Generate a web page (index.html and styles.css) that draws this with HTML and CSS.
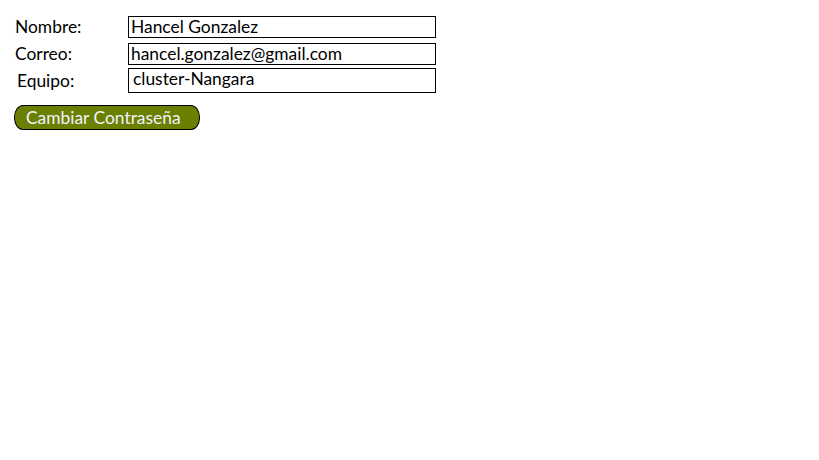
FILE: index.html
```html
<!DOCTYPE html>
<html lang="es">
<head>
<meta charset="utf-8">
<link rel="stylesheet" href="styles.css">
</head>
<body>
<div class="form">
  <div class="row row-1">
    <span class="label">Nombre:</span>
    <div class="field">Hancel Gonzalez</div>
  </div>
  <div class="row row-2">
    <span class="label">Correo:</span>
    <div class="field">hancel.gonzalez@gmail.com</div>
  </div>
  <div class="row row-3">
    <span class="label label-equipo">Equipo:</span>
    <div class="field field-tall">cluster-Nangara</div>
  </div>
  <button class="btn">Cambiar Contraseña</button>
</div>
</body>
</html>
```
FILE: styles.css
```css
html, body {
  margin: 0;
  padding: 0;
  background: #ffffff;
}
body {
  font-family: Lato, "Open Sans", sans-serif;
  font-size: 17.4px;
  color: #000;
}
.form {
  padding: 16px 0 0 15px;
  display: flex;
  flex-direction: column;
  align-items: flex-start;
}
.row {
  display: flex;
  align-items: center;
}
.row-1 { margin-bottom: 5px; }
.row-2 { margin-bottom: 3px; }
.row-3 { margin-bottom: 12px; }
.label {
  width: 113px;
  line-height: 20px;
}
.label-equipo { padding-left: 2px; width: 111px; }
.field {
  width: 304px;
  height: 20px;
  border: 1px solid #000;
  padding-left: 2px;
  line-height: 19px;
  white-space: nowrap;
}
.field-tall {
  height: 23px;
  padding-left: 4px;
  width: 302px;
  line-height: 20px;
}
.btn {
  margin-left: -1px;
  width: 186px;
  height: 25px;
  background: #6b7f00;
  border: 1px solid #000;
  border-radius: 9px / 12px;
  color: #f0f4ff;
  font-family: Lato, "Open Sans", sans-serif;
  font-size: 17.4px;
  text-align: left;
  padding: 0 0 0 11px;
  line-height: 22px;
  cursor: pointer;
  white-space: nowrap;
}
```
